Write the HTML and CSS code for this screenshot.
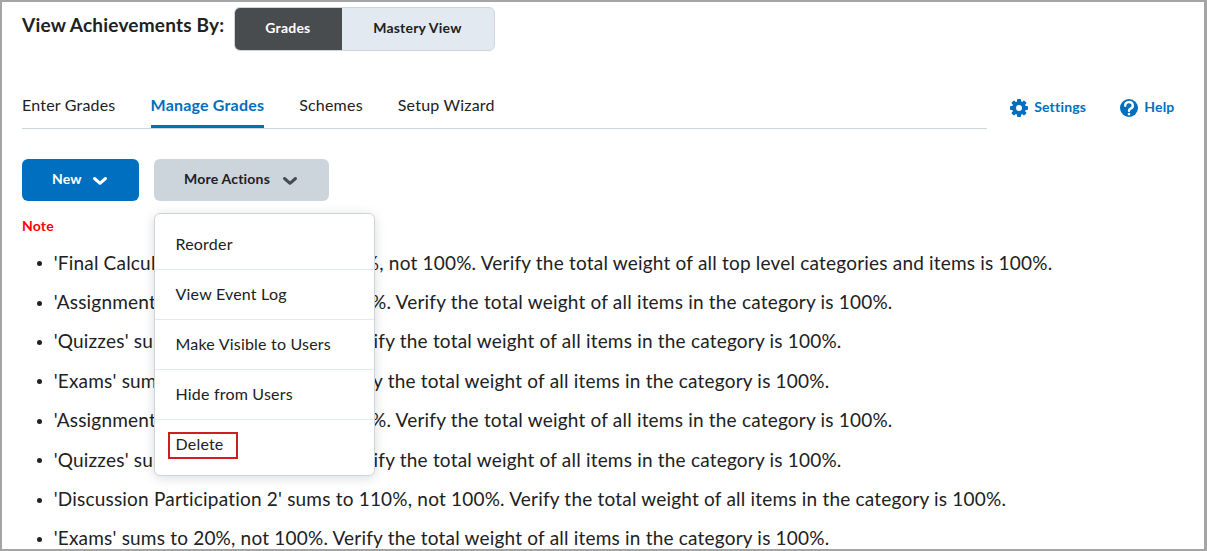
FILE: index.html
```html
<!DOCTYPE html>
<html lang="en">
<head>
  <meta charset="UTF-8" />
  <meta name="viewport" content="width=device-width, initial-scale=1.0"/>
  <title>Manage Grades</title>
  <link rel="stylesheet" href="styles.css">
</head>
<body>

  <div class="page">
    <div class="view-switch">
      <h2>View Achievements By:</h2>
      <div class="switch">
        <button class="switch-btn active">Grades</button>
        <button class="switch-btn">Mastery View</button>
      </div>
    </div>

    <div class="nav-row">
      <nav class="tabs">
        <a class="tab">Enter Grades</a>
        <a class="tab selected">Manage Grades</a>
        <a class="tab">Schemes</a>
        <a class="tab">Setup Wizard</a>
      </nav>
      <div class="tools">
        <a class="tool">
          <svg width="18" height="18" viewBox="0 0 18 18">
            <g fill="#006fbf">
              <circle cx="9" cy="9" r="6.9"/>
              <rect x="7" y="0" width="4" height="18" rx="1"/>
              <rect x="7" y="0" width="4" height="18" rx="1" transform="rotate(45 9 9)"/>
              <rect x="7" y="0" width="4" height="18" rx="1" transform="rotate(90 9 9)"/>
              <rect x="7" y="0" width="4" height="18" rx="1" transform="rotate(135 9 9)"/>
            </g>
            <circle cx="9" cy="9" r="3" fill="#fff"/>
          </svg>
          <span>Settings</span>
        </a>
        <a class="tool">
          <svg width="18" height="18" viewBox="0 0 18 18">
            <circle cx="9" cy="9" r="9" fill="#006fbf"/>
            <path d="M5.2 6.7A3.8 3.5 0 1 1 10.6 9.7Q9 10.4 9 11.8" fill="none" stroke="#fff" stroke-width="2.4" stroke-linecap="round"/>
            <circle cx="9" cy="15.1" r="1.3" fill="#fff"/>
          </svg>
          <span>Help</span>
        </a>
      </div>
    </div>

    <div class="actions">
      <button class="btn primary"><span>New</span>
        <svg width="16" height="10" viewBox="0 0 16 10"><path d="M2.5 2.5 8 7.3l5.5-4.8" fill="none" stroke="#fff" stroke-width="3" stroke-linecap="round" stroke-linejoin="round"/></svg>
      </button>
      <div class="dropdown">
        <button class="btn more"><span>More Actions</span>
          <svg width="16" height="10" viewBox="0 0 16 10"><path d="M2.5 2.5 8 7.3l5.5-4.8" fill="none" stroke="#494c4e" stroke-width="3" stroke-linecap="round" stroke-linejoin="round"/></svg>
        </button>
        <div class="menu">
          <a class="menu-item">Reorder</a>
          <a class="menu-item">View Event Log</a>
          <a class="menu-item">Make Visible to Users</a>
          <a class="menu-item">Hide from Users</a>
          <a class="menu-item"><span class="marked">Delete</span></a>
        </div>
      </div>
    </div>

    <div class="note">Note</div>
    <ul class="warnings">
      <li>'Final Calculated Grade' sums to 110%, not 100%. Verify the total weight of all top level categories and items is 100%.</li>
      <li>'Assignments' sums to 110%, not 100%. Verify the total weight of all items in the category is 100%.</li>
      <li>'Quizzes' sums to 20%, not 100%. Verify the total weight of all items in the category is 100%.</li>
      <li>'Exams' sums to 20%, not 100%. Verify the total weight of all items in the category is 100%.</li>
      <li>'Assignments' sums to 110%, not 100%. Verify the total weight of all items in the category is 100%.</li>
      <li>'Quizzes' sums to 20%, not 100%. Verify the total weight of all items in the category is 100%.</li>
      <li>'Discussion Participation 2' sums to 110%, not 100%. Verify the total weight of all items in the category is 100%.</li>
      <li>'Exams' sums to 20%, not 100%. Verify the total weight of all items in the category is 100%.</li>
    </ul>
  </div>

</body>
</html>
```

FILE: styles.css
```css
* {
  box-sizing: border-box;
}
body {
  margin: 0;
  font-family: Lato, sans-serif;
  font-size: 19px;
  letter-spacing: 0.2px;
  color: #202122;
  background: #fff;
}
.page {
  height: 551px;
  padding: 5px 29.5px 0 20px;
  border: 2px solid #a5a5a5;
  border-right-width: 3px;
  overflow: hidden;
}
.view-switch {
  display: flex;
  gap: 10px;
}
h2 {
  margin: 6px 0 0;
  font-size: 19px;
  line-height: 24px;
  font-weight: 700;
}
.switch {
  display: flex;
  width: 261px;
  height: 44px;
  border: 1px solid #cdd5dc;
  border-radius: 6px;
  overflow: hidden;
  background: #e3e9f1;
}
button {
  font-family: inherit;
  font-size: 14px;
  font-weight: 700;
  letter-spacing: 0.2px;
  color: #202122;
  border: none;
  padding: 0;
}
.switch-btn {
  flex: 1;
  background: none;
  padding: 0 2px 3px 0;
}
.switch-btn.active {
  flex: 0 0 107px;
  background: #494c4e;
  color: #fff;
}
.nav-row {
  display: flex;
  justify-content: space-between;
  margin-top: 42px;
}
.tabs {
  display: flex;
  gap: 35px;
  width: 965px;
  height: 36px;
  border-bottom: 1px solid #cdd5dc;
}
.tab {
  height: 35px;
  font-size: 16px;
  line-height: 24px;
}
.tab.selected {
  font-weight: 700;
  color: #006fbf;
  border-bottom: 3px solid #006fbf;
}
.tools {
  display: flex;
  gap: 34px;
  height: 30px;
}
.tool {
  display: flex;
  align-items: center;
  gap: 6px;
  font-size: 14px;
  font-weight: 700;
  color: #006fbf;
}
.tool span {
  padding-bottom: 3px;
}
.actions {
  display: flex;
  gap: 15px;
  margin-top: 30px;
}
.btn {
  display: flex;
  align-items: center;
  height: 42px;
  padding: 0 30px;
  border-radius: 6px;
}
.btn span {
  padding-bottom: 3px;
}
.btn svg {
  margin: 1px 0 0 10px;
}
.primary {
  width: 117px;
  background: #006fbf;
  color: #fff;
}
.more {
  width: 175px;
  background: #cdd5dc;
}
.more svg {
  margin-left: 12px;
}
.dropdown {
  position: relative;
}
.menu {
  position: absolute;
  top: 54px;
  left: 0;
  width: 221px;
  height: 263px;
  padding: 6px 0;
  background: #fff;
  border: 1px solid #cdd5dc;
  border-radius: 6px;
  box-shadow: 0 2px 12px rgba(0, 0, 0, 0.15);
}
.menu-item {
  display: block;
  height: 50px;
  padding: 0 20.5px;
  font-size: 16px;
  line-height: 47px;
  border-bottom: 1px solid #e3e9f1;
}
.menu-item:last-child {
  border-bottom: none;
}
.marked {
  padding: 0 12px 4px 6px;
  margin-left: -8px;
  border: 2px solid #cd1f1f;
}
.note {
  margin-top: 15px;
  font-size: 14px;
  line-height: 20px;
  font-weight: 700;
  color: #f00;
}
.warnings {
  list-style: none;
  margin: 12.67px 0 0;
  padding-left: 14.7px;
}
.warnings li {
  display: flex;
  align-items: center;
  line-height: 28px;
  margin-bottom: 11.4px;
  white-space: nowrap;
}
.warnings li::before {
  content: "";
  width: 5px;
  height: 5px;
  margin: 2px 12px 0 0;
  border-radius: 50%;
  background: #202122;
}
```
